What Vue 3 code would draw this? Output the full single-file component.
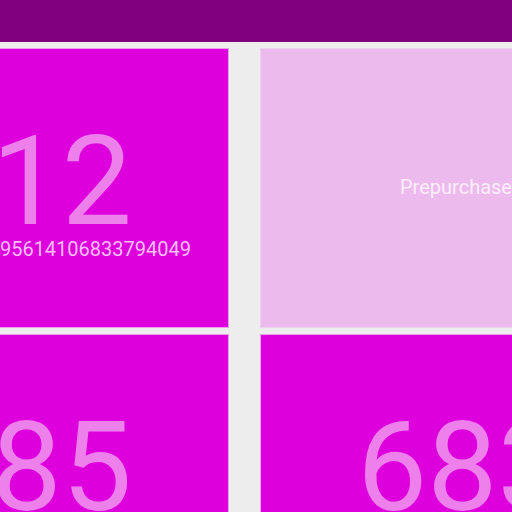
<script setup>
const cards = [
  { value: '12', label: '95614106833794049', side: 'start' },
  { label: 'Prepurchase', side: 'end', muted: true },
  { value: '85', side: 'start' },
  { value: '683', side: 'end' }
]
</script>

<template>
  <div class="page">
    <header class="bar"></header>
    <main class="grid">
      <section v-for="(card, i) in cards" :key="i" class="card" :class="[card.side, { muted: card.muted }]">
        <div v-if="card.value" class="value">{{ card.value }}</div>
        <div v-if="card.label" class="label">{{ card.label }}</div>
      </section>
    </main>
  </div>
</template>

<style>
body {
  margin: 0;
  background: #ededed;
}
</style>

<style scoped>
.page {
  height: 100vh;
  overflow: hidden;
  background: #ededed;
  font-family: Roboto, sans-serif;
}
.bar {
  height: 42px;
  margin-bottom: 6px;
  background: #800080;
}
.grid {
  display: grid;
  grid-template-columns: minmax(0, 229fr) minmax(0, 252fr);
  grid-auto-rows: 280px;
  gap: 6px 31px;
}
.card {
  box-sizing: border-box;
  display: flex;
  flex-direction: column;
  padding-top: 77px;
  overflow: hidden;
  white-space: nowrap;
  border: 1px solid #ed9fec;
  background: #de00dc;
  color: #f7bff6;
}
.start {
  align-items: flex-end;
  border-left: 0;
}
.end {
  align-items: flex-start;
  border-right: 0;
}
.muted {
  padding-top: 126px;
  border-color: #edd2ed;
  background: #edbaed;
  color: #fbeefb;
}
.value {
  padding: 0 96px;
  font-size: 125px;
  line-height: 111px;
  color: #ee80ec;
}
.label {
  padding: 0 37px;
  font-size: 20px;
  line-height: 24px;
}
.muted .label {
  padding: 0 139px;
}
</style>
